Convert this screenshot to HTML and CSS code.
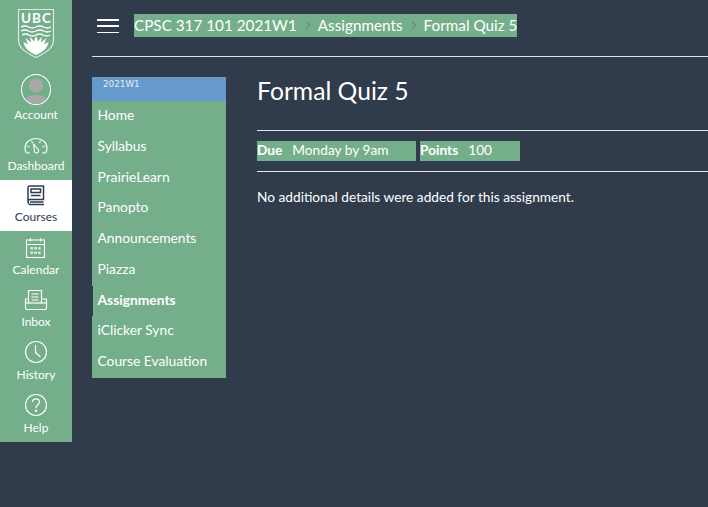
FILE: index.html
```html
<!DOCTYPE html>
<html lang="en">
<head>
<meta charset="utf-8">
<title>Formal Quiz 5</title>
<link rel="stylesheet" href="styles.css">
</head>
<body>
<nav class="global-nav">
  <div class="logo">
    <svg width="38" height="52" viewBox="0 0 38 52">
      <path d="M1.500 1.500H36.500V32C36.500 41 27 45.500 19 49.500C11 45.500 1.500 41 1.500 32Z" fill="none" stroke="#dcebe2" stroke-width="1.200"/>
      <text x="19" y="15" text-anchor="middle" textLength="30" class="logo-text">UBC</text>
      <path d="M4 19q4-2 7.500 0t7.500 0t7.500 0t7.500 0M4 23q4-2 7.500 0t7.500 0t7.500 0t7.500 0M5 27q3.500-2 7 0t7 0t7 0t7 0" fill="none" stroke="#fff" stroke-width="1.300"/>
      <path d="M19 47C12 44 7.500 40 6.500 34L11 36.500L8.500 30L14 34.500L13 28.500L17 33.500L19 27.500L21 33.500L25 28.500L24 34.500L29.500 30L27 36.500L31.500 34C30.500 40 26 44 19 47Z" fill="#fff"/>
    </svg>
  </div>
  <a class="nav-item nav-account">
    <span class="avatar">
      <svg width="28" height="29" viewBox="0 0 28 29">
        <circle cx="14" cy="10.500" r="7" fill="#a9a9a9"/>
        <path d="M1 29C2 22 8 20 14 20S26 22 27 29Z" fill="#a9a9a9"/>
      </svg>
    </span>
    <span>Account</span>
  </a>
  <a class="nav-item nav-dash">
    <svg class="icon" width="26" height="26" viewBox="0 0 26 26" fill="none" stroke="#fff" stroke-width="1.100">
      <path d="M7 21H3.500C2.500 19.500 2 18 2 16C2 10.500 7 6.500 13 6.500S24 10.500 24 16C24 18 23.500 19.500 22.500 21H19"/>
      <path d="M4.500 14L6.500 15M21.500 14L19.500 15M8.500 9L9.500 11M17.500 9L16.500 11"/>
      <path d="M10.500 12L15.500 18C16 19.500 15 21 13.500 21S11 19.800 11.300 18.300Z"/>
    </svg>
    <span>Dashboard</span>
  </a>
  <a class="nav-item nav-active">
    <svg class="icon" width="26" height="26" viewBox="0 0 26 26" fill="none" stroke="#2d3b54" stroke-width="1.500">
      <path d="M5 18.500V5C5 3.800 5.800 3 7 3H20.500V16.500H7C5.800 16.500 5 17.400 5 18.500S5.800 21.500 7 21.500H21"/>
      <rect x="8" y="6" width="9.500" height="3.500"/>
      <path d="M8 12.500H17.500M7 19H20.500"/>
    </svg>
    <span>Courses</span>
  </a>
  <a class="nav-item nav-cal">
    <svg class="icon" width="26" height="26" viewBox="0 0 26 26" fill="none" stroke="#fff" stroke-width="1.100">
      <rect x="3.500" y="5" width="18" height="17.500"/>
      <path d="M3.500 9.500H21.500M7.500 3V6.500M17.500 3V6.500"/>
      <path d="M7.500 12h2.500v2.500H7.500zM11.300 12h2.500v2.500h-2.500zM15.100 12h2.500v2.500h-2.500zM7.500 16.500h2.500v2.500H7.500zM11.300 16.500h2.500v2.500h-2.500zM15.100 16.500h2.500v2.500h-2.500z" fill="#dcebe2" stroke="none"/>
    </svg>
    <span>Calendar</span>
  </a>
  <a class="nav-item">
    <svg class="icon" width="26" height="26" viewBox="0 0 26 26" fill="none" stroke="#fff" stroke-width="1.200">
      <path d="M5.500 17V4.500H18.500V17M8.500 8H15.500M8.500 11H15.500M8.500 14H15.500"/>
      <path d="M5.500 13H2.500V22C2.500 23 3 23.500 4 23.500H22C23 23.500 23.500 23 23.500 22V13H18.500"/>
      <path d="M2.500 17H23.500"/>
    </svg>
    <span>Inbox</span>
  </a>
  <a class="nav-item">
    <svg class="icon" width="26" height="26" viewBox="0 0 26 26" fill="none" stroke="#fff" stroke-width="1.200">
      <circle cx="13" cy="13" r="10.500"/>
      <path d="M12.500 6V13.500L17.500 18"/>
    </svg>
    <span>History</span>
  </a>
  <a class="nav-item">
    <svg class="icon" width="26" height="26" viewBox="0 0 26 26" fill="none" stroke="#fff" stroke-width="1.200">
      <circle cx="13" cy="13" r="10.500"/>
      <path d="M9.500 10C9.500 7.800 11 6.800 13 6.800S16.500 8 16.500 10C16.500 12.800 13 12.800 13 16"/>
      <circle cx="13" cy="18.800" r="0.600" fill="#fff"/>
    </svg>
    <span>Help</span>
  </a>
</nav>
<div class="main">
  <header class="topbar">
    <button class="burger" aria-label="Menu"><i></i><i></i><i></i></button>
    <div class="crumbs">
      <a>CPSC 317 101 2021W1</a>
      <svg class="sep" width="6" height="8" viewBox="0 0 6 8"><path d="M1 0.500L4.500 4L1 7.500" fill="none" stroke="#5f7a78" stroke-width="1"/></svg>
      <a>Assignments</a>
      <svg class="sep" width="6" height="8" viewBox="0 0 6 8"><path d="M1 0.500L4.500 4L1 7.500" fill="none" stroke="#5f7a78" stroke-width="1"/></svg>
      <a>Formal Quiz 5</a>
    </div>
  </header>
  <div class="row">
    <aside class="course-menu">
      <div class="term">2021W1</div>
      <ul class="menu-list">
        <li>Home</li>
        <li>Syllabus</li>
        <li>PrairieLearn</li>
        <li>Panopto</li>
        <li>Announcements</li>
        <li>Piazza</li>
        <li class="current">Assignments</li>
        <li>iClicker Sync</li>
        <li>Course Evaluation</li>
      </ul>
    </aside>
    <section class="content">
      <h1>Formal Quiz 5</h1>
      <div class="details">
        <div class="detail detail-due"><b>Due</b><span>Monday by 9am</span></div>
        <div class="detail detail-points"><b>Points</b><span>100</span></div>
      </div>
      <p class="note">No additional details were added for this assignment.</p>
    </section>
  </div>
</div>
</body>
</html>
```

FILE: styles.css
```css
* { box-sizing: border-box; }
html, body { margin: 0; height: 100%; }
body {
  display: flex;
  align-items: flex-start;
  background: #303c4c;
  color: #fff;
  font-family: Lato, "Liberation Sans", sans-serif;
  overflow: hidden;
}
.global-nav {
  flex: 0 0 72px;
  width: 72px;
  height: 442px;
  background: #74ae8b;
  display: flex;
  flex-direction: column;
  align-items: stretch;
}
.logo {
  height: 74px;
  padding-top: 8px;
  display: flex;
  justify-content: center;
}
.logo-text { font: 700 13.500px Lato, sans-serif; fill: #fff; }
.nav-item {
  height: 53px;
  display: flex;
  flex-direction: column;
  align-items: center;
  font-size: 12px;
  line-height: 14px;
  color: #fff;
  padding-top: 3px;
}
.nav-item .icon { margin-bottom: 3px; flex: none; }
.nav-account { height: 55px; padding-top: 0; }
.nav-dash { height: 51px; }
.nav-dash .icon { margin-bottom: 1px; }
.nav-cal { padding-top: 4px; }
.nav-cal .icon { margin-bottom: 2px; }
.avatar {
  width: 30px;
  height: 31px;
  border: 1px solid #fff;
  border-radius: 50%;
  overflow: hidden;
  display: flex;
  align-items: flex-end;
  justify-content: center;
  margin-bottom: 3px;
  background: #74ae8b;
}
.nav-active { background: #fff; color: #2d3b54; height: 51px; }
.nav-active .icon { margin-bottom: 1px; }
.main { flex: 1; min-width: 0; padding-left: 20px; }
.topbar {
  height: 57px;
  border-bottom: 1px solid #dfe5e6;
  display: flex;
  align-items: flex-start;
  padding: 14px 0 0 5px;
}
.burger {
  width: 22px;
  height: 23px;
  padding: 5px 0 0;
  margin: 0 15px 0 0;
  border: 0;
  background: none;
  display: flex;
  flex-direction: column;
  gap: 4.750px;
}
.burger i { display: block; height: 1.500px; width: 22px; background: #fff; }
.crumbs {
  height: 23px;
  background: #74ae8b;
  display: flex;
  align-items: center;
  font-size: 15.270px;
  line-height: 21px;
  padding-bottom: 1px;
  white-space: nowrap;
}
.sep { margin: 0 7px 0 8px; }
.row { display: flex; align-items: flex-start; padding-top: 20px; }
.course-menu { flex: 0 0 134px; background: #74ae8b; height: 301px; }
.term {
  height: 24px;
  background: #6699cc;
  font: 8.800px/14px "DejaVu Sans", sans-serif;
  padding-left: 11px;
  color: #e3edf7;
}
.menu-list { list-style: none; margin: 0; padding: 0; }
.menu-list li {
  height: 30.750px;
  font-size: 13.800px;
  line-height: 27px;
  padding-left: 5.500px;
}
.menu-list .current { font-weight: 700; box-shadow: inset 1px 0 0 #303c4c; }
.content { flex: 1; padding-left: 31px; min-width: 0; }
h1 {
  margin: 0;
  height: 34px;
  font-size: 24.700px;
  line-height: 28px;
  font-weight: 400;
}
.details {
  margin-top: 19px;
  border-top: 1px solid #dfe5e6;
  border-bottom: 1px solid #dfe5e6;
  height: 42px;
  padding-top: 10px;
  display: flex;
  gap: 4px;
}
.detail {
  height: 20px;
  background: #74ae8b;
  font-size: 13.700px;
  line-height: 18px;
  display: flex;
}
.detail-due { width: 159px; }
.detail-points { width: 100px; }
.detail b { margin-right: 10px; }
.note { margin: 16px 0 0; font-size: 13.700px; line-height: 18px; }
```
